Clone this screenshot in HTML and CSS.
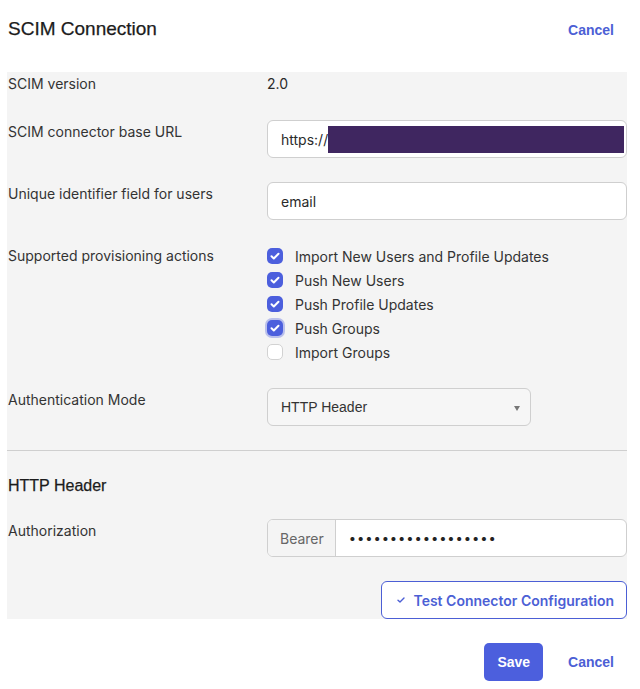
FILE: index.html
```html
<!DOCTYPE html>
<html lang="en">
<head>
    <meta charset="UTF-8">
    <meta name="viewport" content="width=device-width, initial-scale=1.0">
    <title>SCIM Connection</title>
    <link rel="stylesheet" href="styles.css">
</head>
<body>
    <div class="page">
        <header class="page-header">
            <h1>SCIM Connection</h1>
            <button class="link-button">Cancel</button>
        </header>

        <section class="panel">
            <div class="form-row">
                <div class="form-label">SCIM version</div>
                <div class="form-value">2.0</div>
            </div>

            <div class="form-row">
                <div class="form-label">SCIM connector base URL</div>
                <div class="text-field">https://<span class="masked"></span></div>
            </div>

            <div class="form-row">
                <div class="form-label">Unique identifier field for users</div>
                <div class="text-field">email</div>
            </div>

            <div class="form-row">
                <div class="form-label">Supported provisioning actions</div>
                <div class="check-list">
                    <label class="check-item"><span class="checkbox checked"><svg viewBox="0 0 16 16"><path d="M4.5 8.3l2.3 2.2 4.7-4.8"/></svg></span>Import New Users and Profile Updates</label>
                    <label class="check-item"><span class="checkbox checked"><svg viewBox="0 0 16 16"><path d="M4.5 8.3l2.3 2.2 4.7-4.8"/></svg></span>Push New Users</label>
                    <label class="check-item"><span class="checkbox checked"><svg viewBox="0 0 16 16"><path d="M4.5 8.3l2.3 2.2 4.7-4.8"/></svg></span>Push Profile Updates</label>
                    <label class="check-item"><span class="checkbox checked focused"><svg viewBox="0 0 16 16"><path d="M4.5 8.3l2.3 2.2 4.7-4.8"/></svg></span>Push Groups</label>
                    <label class="check-item"><span class="checkbox"></span>Import Groups</label>
                </div>
            </div>

            <div class="form-row">
                <div class="form-label">Authentication Mode</div>
                <div class="select-field">HTTP Header<span class="select-arrow"></span></div>
            </div>

            <hr class="divider">

            <h2>HTTP Header</h2>

            <div class="form-row">
                <div class="form-label">Authorization</div>
                <div class="input-group">
                    <span class="addon">Bearer</span>
                    <span class="secret">&bull;&bull;&bull;&bull;&bull;&bull;&bull;&bull;&bull;&bull;&bull;&bull;&bull;&bull;&bull;&bull;&bull;&bull;</span>
                </div>
            </div>

            <div class="panel-actions">
                <button class="outline-button">
                    <svg viewBox="0 0 10 10"><path d="M2 5.2l2 1.9 4-4"/></svg>
                    Test Connector Configuration
                </button>
            </div>
        </section>

        <footer class="page-footer">
            <button class="primary-button">Save</button>
            <button class="link-button">Cancel</button>
        </footer>
    </div>
</body>
</html>
```

FILE: styles.css
```css
body {
    margin: 0;
    font-family: Inter, "Noto Sans", sans-serif;
    font-size: 14px;
    color: #2a2a2a;
    background-color: white;
}

.page {
    width: 620px;
    margin-left: 7px;
}

/* Header */
.page-header {
    display: flex;
    align-items: center;
    justify-content: space-between;
    height: 72px;
    padding-left: 1px;
    box-sizing: border-box;
    padding-bottom: 14px;
}

.page-header h1 {
    margin: 0;
    font-family: "Liberation Sans", Arial, sans-serif;
    font-size: 19px;
    font-weight: normal;
    color: #1c1c1c;
    -webkit-text-stroke: 0.25px #1c1c1c;
}

.page-header .link-button {
    margin-top: 2px;
}

.link-button {
    background: none;
    border: none;
    padding: 0 13px;
    font-family: "Liberation Sans", Arial, sans-serif;
    font-size: 14px;
    font-weight: bold;
    color: #4c5fd5;
    cursor: pointer;
}

/* Gray panel */
.panel {
    display: flex;
    flex-direction: column;
    gap: 24px;
    background-color: #f4f4f4;
}

.form-row {
    display: grid;
    grid-template-columns: 260px 1fr;
    align-items: start;
}

.form-label {
    padding: 2px 0 0 1px;
    line-height: 20px;
    color: #333;
}

.form-value {
    padding: 2px 0;
    line-height: 20px;
}

.text-field {
    display: flex;
    align-items: center;
    height: 38px;
    box-sizing: border-box;
    padding: 0 13px;
    background-color: white;
    border: 1px solid #cfcfcf;
    border-radius: 6px;
}

.masked {
    flex: 1;
    height: 27px;
    margin-right: -11px;
    background-color: #3f2660;
}

/* Checkboxes */
.check-list {
    display: flex;
    flex-direction: column;
}

.check-item {
    display: flex;
    align-items: center;
    gap: 12px;
    height: 24px;
    color: #333;
}

.checkbox {
    width: 16px;
    height: 16px;
    box-sizing: border-box;
    border: 1.5px solid #d2d2d2;
    border-radius: 5px;
    background-color: white;
}

.checkbox.checked {
    border: none;
    background-color: #4c5fdd;
}

.checkbox.focused {
    box-shadow: 0 0 0 2px rgba(76, 95, 221, 0.35);
}

.checkbox svg {
    display: block;
    width: 16px;
    height: 16px;
    fill: none;
    stroke: white;
    stroke-width: 2;
    stroke-linecap: round;
    stroke-linejoin: round;
}

/* Select */
.select-field {
    position: relative;
    display: flex;
    align-items: center;
    width: 264px;
    height: 38px;
    box-sizing: border-box;
    padding: 0 13px;
    background-color: #f6f6f6;
    border: 1px solid #cfcfcf;
    border-radius: 6px;
    font-family: "Liberation Sans", Arial, sans-serif;
    color: #333;
}

.select-arrow {
    position: absolute;
    right: 10px;
    top: 17px;
    border-left: 3.5px solid transparent;
    border-right: 3.5px solid transparent;
    border-top: 5px solid #777;
}

.divider {
    margin: 0;
    border: none;
    border-top: 1px solid #cfcfcf;
}

.panel h2 {
    margin: 0;
    padding: 1px 0 0 1px;
    font-family: "Liberation Sans", Arial, sans-serif;
    font-size: 16px;
    font-weight: normal;
    line-height: 19px;
    color: #1c1c1c;
    -webkit-text-stroke: 0.25px #1c1c1c;
}

/* Authorization field */
.input-group {
    display: flex;
    height: 38px;
    box-sizing: border-box;
    background-color: white;
    border: 1px solid #cfcfcf;
    border-radius: 6px;
    overflow: hidden;
}

.addon {
    display: flex;
    align-items: center;
    padding: 0 11px 0 12px;
    background-color: #f4f4f4;
    border-right: 1px solid #cfcfcf;
    color: #666;
}

.secret {
    display: flex;
    align-items: center;
    padding-left: 13px;
    font-size: 13px;
    letter-spacing: 0.9px;
    color: #222;
}

.panel-actions {
    display: flex;
    justify-content: flex-end;
}

.outline-button {
    display: flex;
    align-items: center;
    gap: 8px;
    height: 38px;
    padding: 0 12px 0 14px;
    background-color: white;
    border: 1px solid #4c5fd5;
    border-radius: 6px;
    font-family: Inter, sans-serif;
    font-size: 14px;
    font-weight: 600;
    color: #4c5fd5;
    cursor: pointer;
}

.outline-button svg {
    width: 10px;
    height: 10px;
    fill: none;
    stroke: #4c5fd5;
    stroke-width: 1.4;
    stroke-linecap: round;
    stroke-linejoin: round;
}

/* Footer */
.page-footer {
    display: flex;
    justify-content: flex-end;
    align-items: center;
    gap: 12px;
    padding-top: 24px;
}

.primary-button {
    height: 38px;
    padding: 0 13px;
    background-color: #4c5fdd;
    color: white;
    border: none;
    border-radius: 5px;
    font-family: "Liberation Sans", Arial, sans-serif;
    font-size: 14px;
    font-weight: bold;
    cursor: pointer;
}
```
